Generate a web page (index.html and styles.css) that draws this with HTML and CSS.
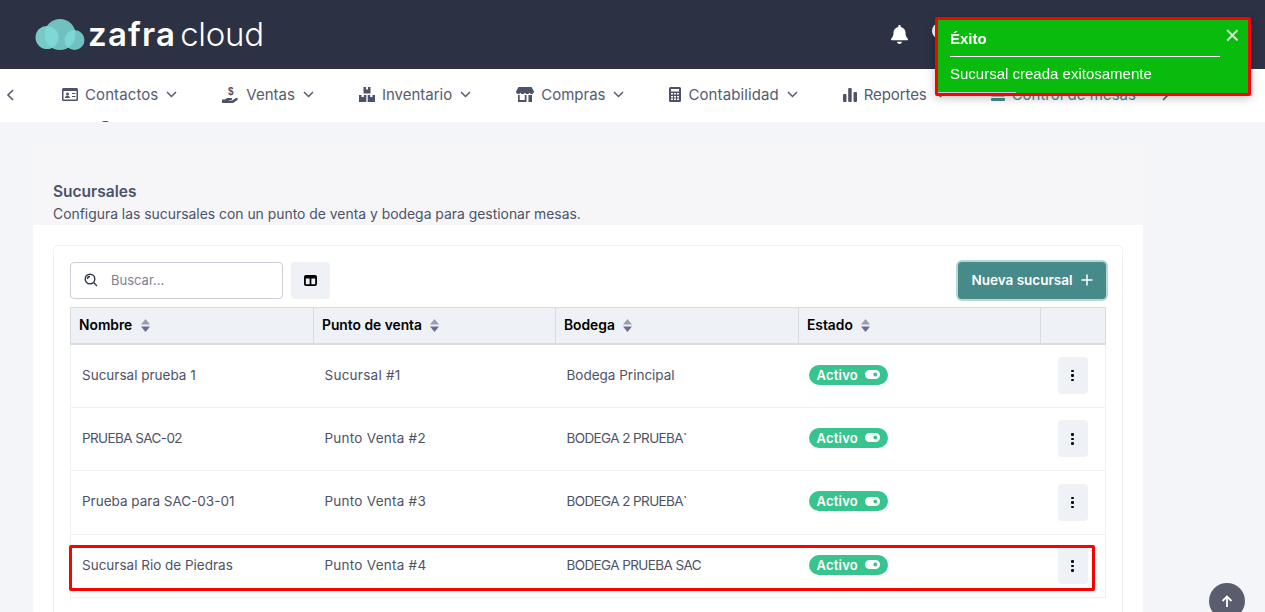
FILE: index.html
```html
<!DOCTYPE html>
<html lang="es">
<head>
<meta charset="utf-8">
<title>Sucursales</title>
<link rel="stylesheet" href="styles.css">
</head>
<body>
<header class="topbar">
  <div class="logo">
    <svg class="logo-mark" width="50" height="32" viewBox="0 0 50 32">
      <circle cx="12" cy="18.500" r="11.500" fill="#7fdad7" opacity=".9"/>
      <circle cx="25" cy="15.500" r="15.500" fill="#7fdad7" opacity=".85"/>
      <circle cx="39.500" cy="21" r="10" fill="#7fdad7" opacity=".85"/>
    </svg>
    <span class="logo-text"><b>zafra</b><i>cloud</i></span>
  </div>
  <div class="top-actions">
    <svg width="17" height="19" viewBox="0 0 448 512" fill="#fff" preserveAspectRatio="none"><path d="M224 0c-18 0-32 14-32 32v19C119 66 64 131 64 208v19c0 47-17 92-49 127l-7 8c-8 10-11 23-5 34s17 18 29 18h384c13 0 24-7 29-18s3-24-5-34l-7-8c-32-35-49-80-49-127v-19c0-77-55-142-128-157V32c0-18-14-32-32-32zm45 493c12-12 19-28 19-45H160c0 17 7 33 19 45s28 19 45 19 33-7 45-19z"/></svg>
    <span class="avatar"></span>
  </div>
</header>

<nav class="menu">
  <svg class="arrow" width="8" height="12" viewBox="0 0 8 12"><path d="M7 1 2 6l5 5" fill="none" stroke="#565b70" stroke-width="1.600"/></svg>
  <ul class="menu-list">
    <li class="menu-item">
      <svg width="16" height="13" viewBox="0 0 16 13"><path fill-rule="evenodd" d="M1.500 0h13A1.500 1.500 0 0 1 16 1.500v10a1.500 1.500 0 0 1-1.500 1.500h-13A1.500 1.500 0 0 1 0 11.500v-10A1.500 1.500 0 0 1 1.500 0zM1.500 3v8.500h13V3zM3 10c0-3 5-3 5 0zM5.500 4.500a1.500 1.500 0 1 1 0 3 1.500 1.500 0 0 1 0-3zM10 5h3.500v1H10zM10 8h3.500v1H10z" fill="#4d5268"/></svg>
      <span class="tight-plus">Contactos</span><svg class="chev" width="11" height="7" viewBox="0 0 11 7"><path d="m1 1 4.500 4.500L10 1" fill="none" stroke="#565b70" stroke-width="1.500"/></svg>
    </li>
    <li class="menu-item">
      <svg width="17" height="18" viewBox="0 0 17 18"><path d="M0 13.500h3l2-1.500h4c1.500 0 1.500 2 0 2H7v.6h3l4-2.500c1.500-.8 2.500.8 1.500 1.800L11 17H0z" fill="#4d5268"/><text x="6" y="9" font-size="10" font-weight="700" fill="#4d5268" font-family="Liberation Sans">$</text></svg>
      <span>Ventas</span><svg class="chev" width="11" height="7" viewBox="0 0 11 7"><path d="m1 1 4.500 4.500L10 1" fill="none" stroke="#565b70" stroke-width="1.500"/></svg>
    </li>
    <li class="menu-item">
      <svg width="16" height="15" viewBox="0 0 16 15" fill="#4d5268"><path d="M4.500 0H7v2.500h2V0h2.500v6.500h-7zM0 8h2.500v2h2.300V8h2.500v7H0zM8.700 8h2.500v2h2.300V8H16v7H8.700z"/></svg>
      <span>Inventario</span><svg class="chev" width="11" height="7" viewBox="0 0 11 7"><path d="m1 1 4.500 4.500L10 1" fill="none" stroke="#565b70" stroke-width="1.500"/></svg>
    </li>
    <li class="menu-item">
      <svg width="18" height="15" viewBox="0 0 18 15" fill="#4d5268"><path d="M2.500 0h13L18 4.500c0 1.500-1 2.500-2.200 2.500-1 0-1.800-.6-2.200-1.300-.4.800-1.400 1.300-2.300 1.300S9.500 6.500 9 5.700C8.500 6.500 7.600 7 6.700 7s-1.900-.5-2.300-1.300C4 6.400 3.200 7 2.200 7 1 7 0 6 0 4.500zM2 8h1.700v5h5.100V8h1.700v7H2zM12.500 8h3.500v7h-3.500z"/></svg>
      <span>Compras</span><svg class="chev" width="11" height="7" viewBox="0 0 11 7"><path d="m1 1 4.500 4.500L10 1" fill="none" stroke="#565b70" stroke-width="1.500"/></svg>
    </li>
    <li class="menu-item">
      <svg width="12" height="15" viewBox="0 0 12 15"><path fill-rule="evenodd" d="M1.500 0h9A1.500 1.500 0 0 1 12 1.500v12a1.500 1.500 0 0 1-1.500 1.500h-9A1.500 1.500 0 0 1 0 13.500v-12A1.500 1.500 0 0 1 1.500 0zM2 2v2.500h8V2zM2 6v1.500h2V6zM5 6v1.500h2V6zM8 6v1.500h2V6zM2 9v1.500h2V9zM5 9v1.500h2V9zM8 9v1.500h2V9zM2 11.500V13h2v-1.500zM5 11.500V13h2v-1.500zM8 11.500V13h2v-1.500z" fill="#4d5268"/></svg>
      <span class="tight-plus">Contabilidad</span><svg class="chev" width="11" height="7" viewBox="0 0 11 7"><path d="m1 1 4.500 4.500L10 1" fill="none" stroke="#565b70" stroke-width="1.500"/></svg>
    </li>
    <li class="menu-item">
      <svg width="14" height="14" viewBox="0 0 14 14" fill="#4d5268"><rect y="6" width="3.500" height="8" rx="1"/><rect x="5.200" width="3.500" height="14" rx="1"/><rect x="10.500" y="4" width="3.500" height="10" rx="1"/></svg>
      <span class="tight">Reportes</span><svg class="chev" width="11" height="7" viewBox="0 0 11 7"><path d="m1 1 4.500 4.500L10 1" fill="none" stroke="#565b70" stroke-width="1.500"/></svg>
    </li>
    <li class="menu-item teal">
      <svg width="14" height="13" viewBox="0 0 14 13" fill="#468a8a"><rect width="14" height="3.500" rx="1"/><rect y="5" width="14" height="3.500" rx="1"/><rect y="10" width="14" height="3" rx="1"/></svg>
      <span>Control de mesas</span>
    </li>
  </ul>
  <svg class="arrow arrow-next" width="8" height="12" viewBox="0 0 8 12"><path d="m1 1 5 5-5 5" fill="none" stroke="#565b70" stroke-width="1.600"/></svg>
</nav>

<main class="page">
  <h1 class="page-title">Configuración</h1>
  <section class="panel">
    <div class="panel-head">
      <h2>Sucursales</h2>
      <p>Configura las sucursales con un punto de venta y bodega para gestionar mesas.</p>
    </div>
    <div class="panel-body">
      <div class="card">
        <div class="toolbar">
          <label class="search">
            <svg width="14" height="14" viewBox="0 0 14 14" fill="none" stroke="#33384a" stroke-width="1.400"><circle cx="6" cy="6" r="4.800"/><path d="m9.500 9.500 3.500 3.500M3.500 6A2.500 2.500 0 0 1 6 3.500"/></svg>
            <span>Buscar...</span>
          </label>
          <button class="icon-btn" type="button">
            <svg width="13" height="11" viewBox="0 0 13 11"><path fill-rule="evenodd" d="M2 0h9a2 2 0 0 1 2 2v7a2 2 0 0 1-2 2H2a2 2 0 0 1-2-2V2a2 2 0 0 1 2-2zM1.800 3.500V9.200h3.800V3.500zM7.400 3.500V9.200h3.800V3.500z" fill="#000"/></svg>
          </button>
          <button class="primary" type="button">Nueva sucursal
            <svg width="12" height="12" viewBox="0 0 12 12"><path d="M6 .5v11M.5 6h11" stroke="#fff" stroke-width="1.500"/></svg>
          </button>
        </div>
        <div class="table-wrap">
          <table class="grid">
            <colgroup><col class="c1"><col class="c2"><col class="c3"><col class="c4"><col class="c5"></colgroup>
            <thead>
              <tr>
                <th>Nombre <svg class="sort" width="9" height="13" viewBox="0 0 9 13"><path d="M4.500 0 9 5.500H0z" fill="#9a9db0"/><path d="M0 7.500h9L4.500 13z" fill="#6a6e8a"/></svg></th>
                <th>Punto de venta <svg class="sort" width="9" height="13" viewBox="0 0 9 13"><path d="M4.500 0 9 5.500H0z" fill="#9a9db0"/><path d="M0 7.500h9L4.500 13z" fill="#6a6e8a"/></svg></th>
                <th>Bodega <svg class="sort" width="9" height="13" viewBox="0 0 9 13"><path d="M4.500 0 9 5.500H0z" fill="#9a9db0"/><path d="M0 7.500h9L4.500 13z" fill="#6a6e8a"/></svg></th>
                <th>Estado <svg class="sort" width="9" height="13" viewBox="0 0 9 13"><path d="M4.500 0 9 5.500H0z" fill="#9a9db0"/><path d="M0 7.500h9L4.500 13z" fill="#6a6e8a"/></svg></th>
                <th></th>
              </tr>
            </thead>
            <tbody>
              <tr>
                <td>Sucursal prueba 1</td><td class="pos">Sucursal #1</td><td>Bodega Principal</td>
                <td><span class="badge">Activo <svg width="15" height="9" viewBox="0 0 15 9"><path fill-rule="evenodd" d="M4.500 0h6a4.500 4.500 0 0 1 0 9h-6a4.500 4.500 0 0 1 0-9zM10.300 2.500a2 2 0 1 0 0 4 2 2 0 0 0 0-4z" fill="#fff"/></svg></span></td>
                <td><button class="kebab" type="button"><i></i><i></i><i></i></button></td>
              </tr>
              <tr>
                <td class="caps">PRUEBA SAC-02</td><td class="pos">Punto Venta #2</td><td class="caps">BODEGA 2 PRUEBA`</td>
                <td><span class="badge">Activo <svg width="15" height="9" viewBox="0 0 15 9"><path fill-rule="evenodd" d="M4.500 0h6a4.500 4.500 0 0 1 0 9h-6a4.500 4.500 0 0 1 0-9zM10.300 2.500a2 2 0 1 0 0 4 2 2 0 0 0 0-4z" fill="#fff"/></svg></span></td>
                <td><button class="kebab" type="button"><i></i><i></i><i></i></button></td>
              </tr>
              <tr>
                <td>Prueba para SAC-03-01</td><td class="pos">Punto Venta #3</td><td class="caps">BODEGA 2 PRUEBA`</td>
                <td><span class="badge">Activo <svg width="15" height="9" viewBox="0 0 15 9"><path fill-rule="evenodd" d="M4.500 0h6a4.500 4.500 0 0 1 0 9h-6a4.500 4.500 0 0 1 0-9zM10.300 2.500a2 2 0 1 0 0 4 2 2 0 0 0 0-4z" fill="#fff"/></svg></span></td>
                <td><button class="kebab" type="button"><i></i><i></i><i></i></button></td>
              </tr>
              <tr>
                <td>Sucursal Rio de Piedras</td><td class="pos">Punto Venta #4</td><td class="caps">BODEGA PRUEBA SAC</td>
                <td><span class="badge">Activo <svg width="15" height="9" viewBox="0 0 15 9"><path fill-rule="evenodd" d="M4.500 0h6a4.500 4.500 0 0 1 0 9h-6a4.500 4.500 0 0 1 0-9zM10.300 2.500a2 2 0 1 0 0 4 2 2 0 0 0 0-4z" fill="#fff"/></svg></span></td>
                <td><button class="kebab" type="button"><i></i><i></i><i></i></button></td>
              </tr>
            </tbody>
          </table>
          <div class="highlight"></div>
        </div>
      </div>
    </div>
  </section>
</main>

<aside class="toast">
  <button class="toast-close" type="button">×</button>
  <strong>Éxito</strong>
  <p>Sucursal creada exitosamente</p>
  <span class="toast-progress"></span>
</aside>

<button class="to-top" type="button">
  <svg width="12" height="12" viewBox="0 0 12 12"><path d="M6 12V1.500M1.500 6 6 1.500 10.500 6" fill="none" stroke="#fff" stroke-width="1.800"/></svg>
</button>
</body>
</html>
```
FILE: styles.css
```css
* { box-sizing: border-box; }
html, body { height: 100%; }
body {
  margin: 0;
  background: #f4f5f8;
  font-family: "Inter", "Liberation Sans", sans-serif;
  color: #4d5268;
  overflow: hidden;
}
.topbar {
  height: 69px;
  background: #2c3144;
  display: flex;
  align-items: center;
  justify-content: space-between;
  padding: 0 0 0 35px;
  position: relative;
  z-index: 3;
}
.logo { display: flex; align-items: center; gap: 3px; }
.logo-text { color: #fff; font-size: 33px; line-height: 1; }
.logo-text b { font-weight: 600; letter-spacing: 1.200px; margin-right: 4px; }
.logo-text i { font-style: normal; font-weight: 300; letter-spacing: -.3px; }
.top-actions { display: flex; align-items: center; gap: 24px; margin-right: 317px; }
.avatar { width: 16px; height: 16px; border-radius: 50%; background: #fff; margin-bottom: 7px; }

.menu {
  height: 53px;
  background: #fff;
  display: flex;
  align-items: center;
  padding: 0 0 2px 6px;
  position: relative;
  z-index: 2;
  font-size: 15px;
}
.menu-list { list-style: none; margin: 0; padding: 0 0 0 48px; display: flex; gap: 45px; flex: none; }
.menu-item { display: flex; align-items: center; gap: 7px; white-space: nowrap; color: #565b70; }
.menu-item .chev { margin-left: 1px; }
.menu-item .tight-plus { letter-spacing: .1px; }
.menu-item .tight { letter-spacing: -.1px; }
.menu-item.teal { color: #468a8a; }
.arrow-next { margin-left: 26px; }

.page { margin-top: -25px; padding: 0 122px 0 33px; }
.page-title {
  position: relative; z-index: 3;
  margin: 0 0 0 20px; height: 45px; font-size: 18px; line-height: 30px; font-weight: 600; color: #4d5268;
  clip-path: inset(24px 0 0 0);
}
.panel { width: 1110px; }
.panel-head { background: #f6f6f8; padding: 13px 20px 2px; height: 83px; }
.panel-head h2 { margin: 0; font-size: 15.500px; line-height: 22px; font-weight: 600; color: #4d5268; padding-top: 26px; height: 47px; }
.panel-head p { margin: 2px 0 0; font-size: 13.900px; line-height: 20px; color: #4d5268; }
.panel-body { background: #fff; padding: 20px; }
.card { background: #fff; border: 1px solid #eff0f5; border-radius: 6px; padding: 16px; height: 400px; }
.toolbar { display: flex; align-items: stretch; gap: 8px; height: 37px; margin-bottom: 8px; }
.search {
  width: 213px; display: flex; align-items: center; gap: 13px; padding: 0 0 1px 13px;
  border: 1px solid #ccced8; border-radius: 4px; background: #fff;
  font-size: 13px; color: #7c8093;
}
.icon-btn { width: 39px; border: 0; border-radius: 4px; background: #eef1f6; display: flex; align-items: center; justify-content: center; padding: 0; }
.primary {
  margin-left: auto; width: 148px; border: 0; border-radius: 4px; background: #468a8a;
  box-shadow: 0 0 0 2px #b8d8d8; color: #fff; font: 600 13.500px "Inter", sans-serif;
  display: flex; align-items: center; justify-content: center; gap: 8px; padding: 0 0 1px;
}
.table-wrap { position: relative; width: 1036px; }
.grid { width: 1035px; border-collapse: collapse; table-layout: fixed; font-size: 13.500px; }
.c1 { width: 243px; } .c2 { width: 242px; } .c3 { width: 243px; } .c4 { width: 242px; } .c5 { width: 65px; }
.grid th {
  height: 36px; background: #eef1f6; border: 1px solid #d8dbe2; border-width: 1px 1px 2px;
  text-align: left; padding: 0 8px; font-weight: 600; color: #000; font-size: 13.800px; white-space: nowrap;
}
.sort { margin-left: 5px; vertical-align: -2px; }
.grid td { height: 63.500px; border: 1px solid #eff0f5; border-width: 1px 0; padding: 0 11px; color: #4d5268; white-space: nowrap; }
.grid td:not(:last-child) { padding-bottom: 2px; }
.grid td:first-child { border-left-width: 1px; }
.grid td:last-child { border-right-width: 1px; }
.grid td.caps { letter-spacing: -.6px; }
.grid td.pos { letter-spacing: .25px; }
.badge { display: inline-flex; align-items: center; gap: 7px; height: 20px; padding: 0 7px 0 8px; width: 79px; border-radius: 10px; background: #37c48f; color: #fff; font-weight: 600; font-size: 13px; margin-left: -1px; letter-spacing: .2px; }
.kebab { width: 30px; height: 37px; margin-left: 6px; border: 0; border-radius: 4px; background: #eef1f6; display: flex; flex-direction: column; align-items: center; justify-content: center; gap: 2px; padding: 0; }
.kebab i { width: 2.500px; height: 2.500px; border-radius: 50%; background: #000; }
.highlight { position: absolute; left: -1px; top: 238px; width: 1026px; height: 46px; border: 3px solid #f00; border-radius: 2px; pointer-events: none; }

.toast {
  position: fixed; left: 935px; top: 17px; width: 316px; height: 79px; z-index: 5;
  background: #08bb0d; border: 3px solid #f00; border-radius: 2px; color: #fff;
  padding: 9px 12px 8px; font-family: "Liberation Sans", sans-serif;
  box-shadow: 0 2px 10px rgba(0,0,0,.25);
}
.toast strong { display: block; font-size: 15px; line-height: 20px; padding-bottom: 7px; width: 270px; border-bottom: 1px solid #fff; }
.toast p { margin: 7px 0 0; font-size: 15px; line-height: 20px; }
.toast-close { position: absolute; right: 8px; top: 3px; padding: 0; border: 0; background: none; color: #cfeecf; font: 26px/24px "Liberation Sans", sans-serif; }
.toast-progress { position: absolute; left: 0; bottom: 0; width: 78px; height: 1px; background: #bcd; }
.to-top { position: fixed; left: 1209px; top: 583px; width: 36px; height: 36px; border-radius: 50%; border: 0; background: #5a5d6e; display: flex; align-items: center; justify-content: center; padding: 0; }
```
